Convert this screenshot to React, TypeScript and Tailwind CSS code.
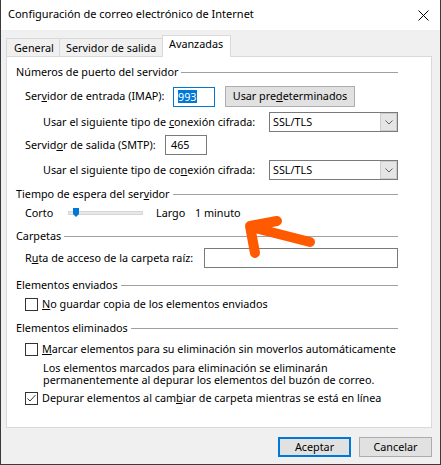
import React from "react";

function Heading({ children, mt }: { children: React.ReactNode; mt: string }) {
  return (
    <div className={`flex items-center h-[18px] pl-[9px] pr-[33px] ${mt}`}>
      <span className="whitespace-nowrap">{children}</span>
      <div className="flex-1 h-px bg-[#a0a0a0] ml-[3px] mt-[1px]" />
    </div>
  );
}

function Select() {
  return (
    <div className="w-[129px] h-[20px] border border-[#7a7a7a] bg-white flex items-center">
      <span className="flex-1 pl-[3px]">SSL/TLS</span>
      <div className="w-[17px] h-[18px] bg-[#e5e5e5] border border-[#cccccc] flex items-center justify-center">
        <svg width="8" height="5" viewBox="0 0 8 5">
          <path d="M0.5 0.5 L4 4 L7.5 0.5" fill="none" stroke="#606060" strokeWidth="1" />
        </svg>
      </div>
    </div>
  );
}

function Checkbox({ checked }: { checked?: boolean }) {
  return (
    <div className="w-[13px] h-[13px] border border-[#333333] bg-white flex items-center justify-center shrink-0">
      {checked && (
        <svg width="11" height="11" viewBox="0 0 11 11">
          <path d="M1.5 5.5 L4 8 L9.5 2" fill="none" stroke="#333333" strokeWidth="1" />
        </svg>
      )}
    </div>
  );
}

export default function App() {
  return (
    <div className="relative w-[441px] h-[465px] bg-[#f0f0f0] border-x border-b border-[#3a3a3a] flex flex-col font-['Noto_Sans',sans-serif] text-[10.8px] text-black">
      {/* Title bar */}
      <div className="h-[30px] bg-white flex items-center justify-between pl-[7px] pb-[2px] text-[11px]">
        <span>Configuración de correo electrónico de Internet</span>
        <svg width="11" height="11" viewBox="0 0 11 11" className="mr-[11px] mt-[2px]">
          <path d="M0.5 0.5 L10.5 10.5 M10.5 0.5 L0.5 10.5" stroke="#000" strokeWidth="1" />
        </svg>
      </div>

      {/* Tabs */}
      <div className="h-[26px] flex items-end pl-[5px]">
        <div className="w-[54px] h-[18px] border-l border-t border-r border-[#d9d9d9] flex items-center pl-[7px] pt-[2px]">
          General
        </div>
        <div className="w-[103px] h-[18px] border-t border-r border-[#d9d9d9] flex items-center pl-[6px] pt-[2px]">
          Servidor de salida
        </div>
        <div className="relative z-10 -ml-px -mb-px w-[69px] h-[22px] bg-white border-l border-t border-r border-[#d9d9d9] flex items-center pl-[6px] pb-[4px]">
          Avanzadas
        </div>
      </div>

      {/* Panel */}
      <div className="ml-[5px] w-[426px] h-[372px] bg-white border border-[#d9d9d9] flex flex-col">
        <Heading mt="mt-[6px]">Números de puerto del servidor</Heading>

        <div className="mt-[5px] h-[21px] flex items-center pl-[18px]">
          <span className="w-[148px]">
            Ser<u>v</u>idor de entrada (IMAP):
          </span>
          <div className="w-[42px] h-[20px] border border-[#0078d7] flex items-center pl-[4px]">
            <span className="inline-block bg-[#0078d7] text-white h-[13px] leading-[13px]">993</span>
          </div>
          <div className="ml-[10px] w-[130px] h-[21px] bg-[#e1e1e1] border border-[#adadad] flex items-center justify-center">
            <span>
              Usar pre<u>d</u>eterminados
            </span>
          </div>
        </div>

        <div className="mt-[5px] h-[20px] flex items-center pl-[36px]">
          <span className="w-[226px]">
            Usar el siguiente tipo de <u>c</u>onexión cifrada:
          </span>
          <Select />
        </div>

        <div className="mt-[3px] h-[20px] flex items-center pl-[18px]">
          <span className="w-[140px]">
            Servid<u>o</u>r de salida (SMTP):
          </span>
          <div className="w-[42px] h-[20px] border border-[#7a7a7a] flex items-center pl-[5px]">465</div>
        </div>

        <div className="mt-[5px] h-[20px] flex items-center pl-[36px]">
          <span className="w-[226px]">
            Usar el siguiente tipo de co<u>n</u>exión cifrada:
          </span>
          <Select />
        </div>

        <Heading mt="mt-[5px]">
          Tiempo de espera del ser<u>v</u>idor
        </Heading>

        <div className="mt-[1px] h-[18px] flex items-center pl-[18px]">
          <span className="w-[43px]">Corto</span>
          <div className="relative w-[75px] h-[4px] bg-[#e7e7e7] border border-[#d6d6d6]">
            <svg width="7" height="9" viewBox="0 0 7 9" className="absolute left-[4px] top-[-4px]">
              <path d="M0 0 H6 V6 L3 9 L0 6 Z" fill="#0078d7" />
            </svg>
          </div>
          <span className="ml-[13px] w-[39px]">Largo</span>
          <span>1 minuto</span>
        </div>

        <Heading mt="mt-[5px]">Carpetas</Heading>

        <div className="mt-[3px] h-[20px] flex items-center pl-[18px]">
          <span className="w-[179px]">
            R<u>u</u>ta de acceso de la carpeta raíz:
          </span>
          <div className="w-[194px] h-[20px] border border-[#7a7a7a]" />
        </div>

        <Heading mt="mt-[8px]">Elementos enviados</Heading>

        <div className="mt-[1px] h-[19px] flex items-center pl-[18px]">
          <Checkbox />
          <span className="ml-[4px]">
            <u>N</u>o guardar copia de los elementos enviados
          </span>
        </div>

        <Heading mt="mt-[5px]">Elementos eliminados</Heading>

        <div className="mt-[4px] h-[17px] flex items-center pl-[18px]">
          <Checkbox />
          <span className="ml-[4px]">
            <u>M</u>arcar elementos para su eliminación sin moverlos automáticamente
          </span>
        </div>

        <div className="mt-[3px] h-[26px] pl-[36px] leading-[12.5px] pt-[0.5px]">
          Los elementos marcados para eliminación se eliminarán
          <br />
          permanentemente al depurar los elementos del buzón de correo.
        </div>

        <div className="mt-[3px] h-[17px] flex items-center pl-[18px]">
          <Checkbox checked />
          <span className="ml-[4px]">
            Depurar elementos al cam<u>b</u>iar de carpeta mientras se está en línea
          </span>
        </div>
      </div>

      {/* Buttons */}
      <div className="mt-[9px] flex justify-end gap-[8px] pr-[8px]">
        <div className="w-[73px] h-[20px] bg-[#e1e1e1] border-2 border-[#0078d7] flex items-center justify-center">
          Aceptar
        </div>
        <div className="w-[73px] h-[20px] bg-[#e1e1e1] border border-[#adadad] flex items-center justify-center">
          Cancelar
        </div>
      </div>

      {/* Orange annotation arrow */}
      <svg
        className="absolute left-0 top-0 pointer-events-none"
        width="441"
        height="465"
        viewBox="0 0 441 465"
      >
        <path
          d="M309 242 L250 227 M276 221 L249 226 L254 253"
          fill="none"
          stroke="#ff5a00"
          strokeWidth="10"
          strokeLinecap="round"
          strokeLinejoin="round"
        />
      </svg>
    </div>
  );
}
